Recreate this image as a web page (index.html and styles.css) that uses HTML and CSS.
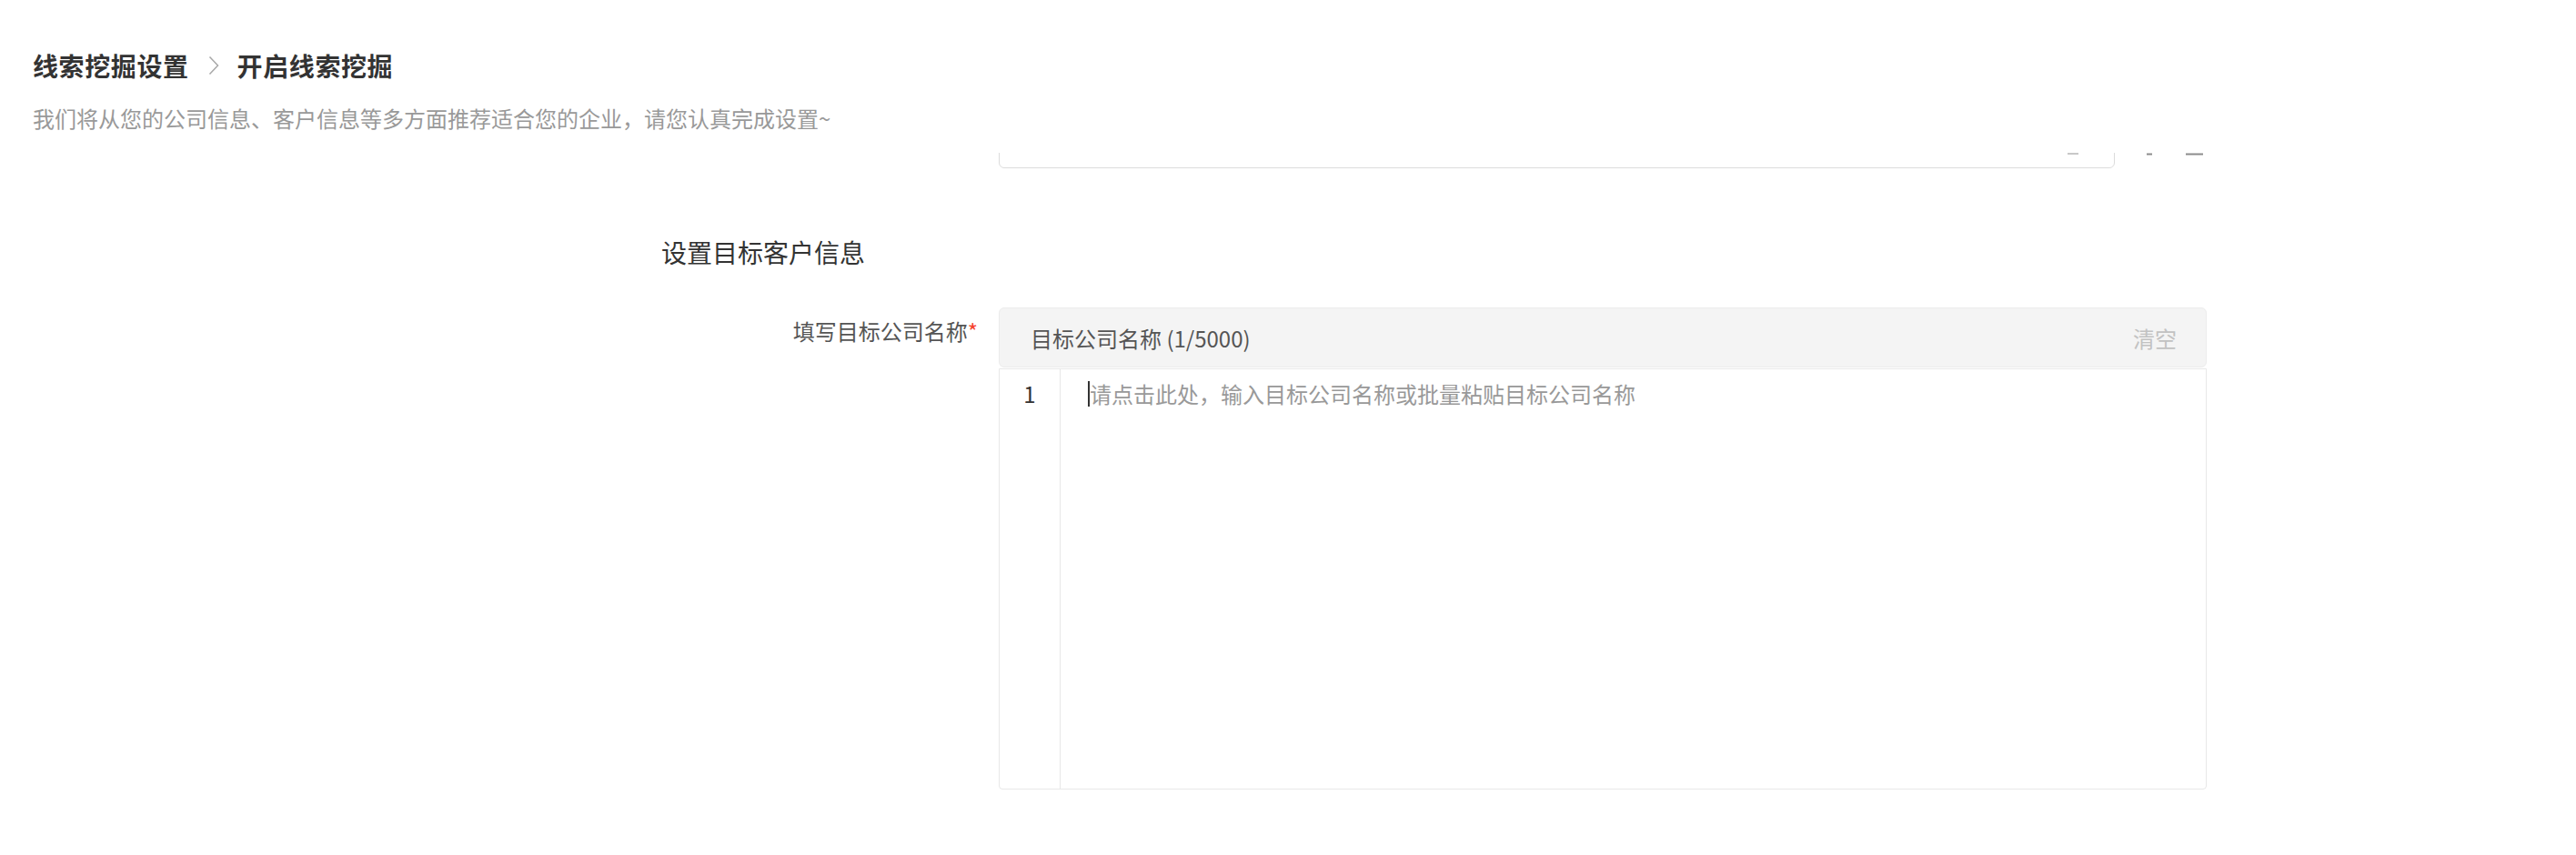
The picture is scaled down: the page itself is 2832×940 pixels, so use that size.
FILE: index.html
```html
<!DOCTYPE html>
<html lang="zh-CN">
<head>
  <meta charset="UTF-8" />
  <meta name="viewport" content="width=device-width, initial-scale=1" />
  <title>开启线索挖掘</title>
  <link rel="stylesheet" href="styles.css">
</head>
<body>
  <div class="page">
    <header class="top">
      <div class="crumbs">
        <span class="crumb">线索挖掘设置</span>
        <svg class="crumb-sep" width="12" height="22" viewBox="0 0 12 22">
          <path d="M1.5 1.5 L10.5 11 L1.5 20.5" fill="none" stroke="#a8a8a8" stroke-width="1.5"/>
        </svg>
        <span class="crumb">开启线索挖掘</span>
      </div>
      <p class="intro">我们将从您的公司信息、客户信息等多方面推荐适合您的企业，请您认真完成设置~</p>
    </header>

    <main class="content">
      <!-- previous field, scrolled up under the header -->
      <div class="form-item clipped">
        <div class="label"></div>
        <div class="input">
          <svg class="suffix" width="12" height="14" viewBox="0 0 12 14">
            <rect x="0" y="12" width="12" height="2" fill="#c8c8c8"/>
          </svg>
        </div>
        <svg class="op-icon op-edit" width="20" height="20" viewBox="0 0 20 20">
          <path d="M7 18.5 H13" stroke="#8c8c8c" stroke-width="2"/>
        </svg>
        <svg class="op-icon op-del" width="20" height="20" viewBox="0 0 20 20">
          <path d="M0 18.5 H19" stroke="#8c8c8c" stroke-width="2"/>
        </svg>
      </div>

      <h2 class="section-title">设置目标客户信息</h2>

      <div class="form-item">
        <label class="label">填写目标公司名称<span class="req">*</span></label>
        <div class="editor">
          <div class="editor-head">
            <span class="head-title">目标公司名称 (1/5000)</span>
            <span class="head-clear">清空</span>
          </div>
          <div class="editor-body">
            <div class="gutter">1</div>
            <div class="lines">
              <span class="caret"></span><span class="placeholder">请点击此处，输入目标公司名称或批量粘贴目标公司名称</span>
            </div>
          </div>
        </div>
      </div>
    </main>
  </div>
</body>
</html>
```

FILE: styles.css
```css
body, html {
  margin: 0;
  padding: 0;
  background: #fff;
  font-family: "Noto Sans CJK SC", "Liberation Sans", sans-serif;
  color: #333;
}
.page {
  width: 2832px;
  height: 940px;
  overflow: hidden;
}
.top {
  height: 168px;
  padding-left: 36px;
  box-sizing: border-box;
}
.crumbs {
  display: flex;
  align-items: center;
  padding-top: 52px;
  height: 40px;
}
.crumb {
  font-size: 28px;
  line-height: 40px;
  font-weight: 700;
  color: #333;
  letter-spacing: 0.6px;
}
.crumb-sep {
  margin: 0 20px 0 21px;
}
.intro {
  margin: 20px 0 0;
  font-size: 24px;
  line-height: 36px;
  color: #999;
}
.content {
  padding-left: 727px;
}
.form-item {
  display: flex;
  align-items: flex-start;
}
.label {
  width: 348px;
  margin-right: 23px;
  flex-shrink: 0;
  text-align: right;
  font-size: 24px;
  line-height: 36px;
  padding-top: 8px;
  color: #555;
}
.req {
  color: #f5412d;
}
.clipped {
  height: 17px;
  overflow: hidden;
  align-items: flex-end;
}
.clipped .label {
  padding-top: 0;
}
.input {
  width: 1227px;
  height: 64px;
  flex-shrink: 0;
  box-sizing: border-box;
  border: 1px solid #dcdcdc;
  border-radius: 6px;
  display: flex;
  justify-content: flex-end;
  align-items: flex-end;
  padding: 0 39px 14px 0;
}
.op-icon {
  flex-shrink: 0;
  margin-bottom: 14px;
}
.op-edit {
  margin-left: 28px;
}
.op-del {
  margin-left: 30px;
}
.section-title {
  margin: 72px 0 0;
  font-size: 28px;
  line-height: 40px;
  font-weight: 400;
  color: #333;
}
.section-title + .form-item {
  margin-top: 41px;
}
.editor {
  width: 1328px;
  flex-shrink: 0;
}
.editor-head {
  height: 66px;
  box-sizing: border-box;
  background: #f4f4f4;
  border: 1px solid #ececec;
  border-radius: 6px;
  display: flex;
  align-items: center;
  justify-content: space-between;
  padding: 0 32px 0 34px;
  font-size: 24px;
}
.head-title {
  color: #555;
}
.head-clear {
  color: #c2c2c2;
}
.editor-body {
  margin-top: 1px;
  height: 463px;
  box-sizing: border-box;
  border: 1px solid #e8e8e8;
  border-radius: 0 0 4px 4px;
  display: flex;
}
.gutter {
  width: 66px;
  flex-shrink: 0;
  border-right: 1px solid #e8e8e8;
  text-align: center;
  font-size: 24px;
  line-height: 36px;
  padding-top: 9px;
  color: #333;
}
.lines {
  padding: 9px 0 0 30px;
  display: flex;
  align-items: center;
  height: 36px;
  font-size: 24px;
  line-height: 36px;
}
.caret {
  width: 2px;
  height: 28px;
  background: #333;
}
.placeholder {
  color: #999;
}
```
